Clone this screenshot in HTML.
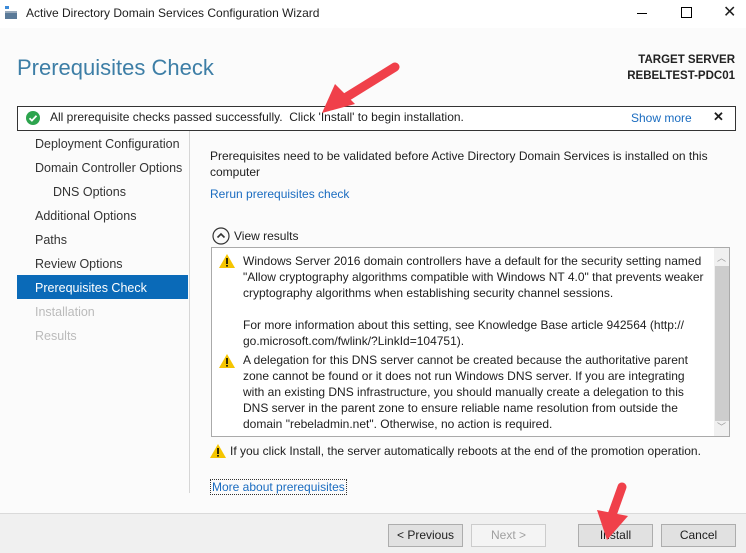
<!DOCTYPE html>
<html><head><meta charset="utf-8"><style>
*{margin:0;padding:0;box-sizing:border-box}
body{width:746px;height:553px;overflow:hidden;background:#fbfbfb;font-family:"Liberation Sans",sans-serif;font-size:12px;color:#1e1e1e;position:relative}
.a{position:absolute;white-space:nowrap}
.nav{position:absolute;left:35px;font-size:12.5px;color:#333}
.btn{position:absolute;top:524px;height:23px;border:1px solid #adadad;background:#e1e1e1;text-align:center;line-height:21px;font-size:12px}
.rt{position:absolute;left:243px;font-size:12px;line-height:16px;white-space:nowrap}
</style></head><body>
<div class="a" style="left:0;top:0;width:746px;height:28px;background:#fff"></div>
<svg class="a" style="left:4px;top:6px" width="14" height="14"><rect x="1" y="0" width="4" height="3" fill="#3c8ad8"/><rect x="1" y="5" width="12" height="8" fill="#5a7a98"/><rect x="1" y="5" width="12" height="2" fill="#9ab"/></svg>
<div class="a" style="left:26px;top:6px;font-size:12px">Active Directory Domain Services Configuration Wizard</div>
<div class="a" style="left:637px;top:13px;width:10px;height:1px;background:#000"></div>
<div class="a" style="left:681px;top:7px;width:11px;height:11px;border:1px solid #000"></div>
<div class="a" style="left:723px;top:2px;font-size:16px;font-weight:300">✕</div>
<div class="a" style="left:17px;top:55px;font-size:22px;color:#3d7ea6">Prerequisites Check</div>
<div class="a" style="right:11px;top:52px;font-size:11.5px;font-weight:bold;text-align:right;line-height:16px;color:#222">TARGET SERVER<br>REBELTEST-PDC01</div>
<div class="a" style="left:17px;top:106px;width:719px;height:25px;border:1px solid #333;background:#fff"></div>
<svg class="a" style="left:26px;top:111px" width="14" height="14"><circle cx="7" cy="7" r="7" fill="#2da44e"/><path d="M3.5 7.2l2.4 2.4 4.6-4.8" stroke="#fff" stroke-width="1.8" fill="none"/></svg>
<div class="a" style="left:50px;top:110px;font-size:12px">All prerequisite checks passed successfully.&nbsp; Click 'Install' to begin installation.</div>
<div class="a" style="left:631px;top:111px;color:#1a6cc0">Show more</div>
<div class="a" style="left:713px;top:109px;font-size:13px;font-weight:bold">✕</div>
<div class="a" style="left:189px;top:131px;width:1px;height:362px;background:#d6d6d6"></div>
<div class="nav" style="top:137px">Deployment Configuration</div>
<div class="nav" style="top:161px">Domain Controller Options</div>
<div class="nav" style="top:185px;left:53px">DNS Options</div>
<div class="nav" style="top:209px">Additional Options</div>
<div class="nav" style="top:233px">Paths</div>
<div class="nav" style="top:257px">Review Options</div>
<div class="a" style="left:17px;top:275px;width:171px;height:24px;background:#0a6ab8"></div>
<div class="nav" style="top:281px;color:#fff">Prerequisites Check</div>
<div class="nav" style="top:305px;color:#bbb">Installation</div>
<div class="nav" style="top:329px;color:#bbb">Results</div>
<div class="a" style="left:210px;top:148px;line-height:16px">Prerequisites need to be validated before Active Directory Domain Services is installed on this<br>computer</div>
<div class="a" style="left:210px;top:187px;color:#1a6cc0">Rerun prerequisites check</div>
<svg class="a" style="left:212px;top:227px" width="18" height="18"><circle cx="9" cy="9" r="8" fill="none" stroke="#333" stroke-width="1.2"/><path d="M5.5 10.5l3.5-3.5 3.5 3.5" fill="none" stroke="#333" stroke-width="1.6"/></svg>
<div class="a" style="left:234px;top:229px">View results</div>
<div class="a" style="left:211px;top:247px;width:519px;height:190px;border:1px solid #aaa;background:#fff;overflow:hidden">
<div class="a" style="left:502px;top:0;width:16px;height:188px;background:#f0f0f0"></div>
<div class="a" style="left:503px;top:18px;width:14px;height:155px;background:#cdcdcd"></div>
<div class="a" style="left:505px;top:3px;font-size:9px;color:#999">︿</div>
<div class="a" style="left:505px;top:172px;font-size:9px;color:#999">﹀</div>
</div>
<svg class="a" style="left:219px;top:254px" width="16" height="14"><path d="M8 0L16 14H0Z" fill="#f5c500"/><rect x="7.2" y="4" width="1.6" height="6" fill="#000"/><rect x="7.2" y="11" width="1.6" height="1.6" fill="#000"/></svg>
<div class="rt" style="top:253px">Windows Server 2016 domain controllers have a default for the security setting named<br>"Allow cryptography algorithms compatible with Windows NT 4.0" that prevents weaker<br>cryptography algorithms when establishing security channel sessions.<br><br>For more information about this setting, see Knowledge Base article 942564 (http://<br>go.microsoft.com/fwlink/?LinkId=104751).</div>
<svg class="a" style="left:219px;top:354px" width="16" height="14"><path d="M8 0L16 14H0Z" fill="#f5c500"/><rect x="7.2" y="4" width="1.6" height="6" fill="#000"/><rect x="7.2" y="11" width="1.6" height="1.6" fill="#000"/></svg>
<div class="rt" style="top:352px">A delegation for this DNS server cannot be created because the authoritative parent<br>zone cannot be found or it does not run Windows DNS server. If you are integrating<br>with an existing DNS infrastructure, you should manually create a delegation to this<br>DNS server in the parent zone to ensure reliable name resolution from outside the<br>domain "rebeladmin.net". Otherwise, no action is required.</div>
<svg class="a" style="left:210px;top:444px" width="16" height="14"><path d="M8 0L16 14H0Z" fill="#f5c500"/><rect x="7.2" y="4" width="1.6" height="6" fill="#000"/><rect x="7.2" y="11" width="1.6" height="1.6" fill="#000"/></svg>
<div class="a" style="left:230px;top:444px">If you click Install, the server automatically reboots at the end of the promotion operation.</div>
<div class="a" style="left:210px;top:479px;color:#1a6cc0;border:1px dotted #333;padding:0 1px">More about prerequisites</div>
<div class="a" style="left:0;top:513px;width:746px;height:40px;background:#f0f0f0;border-top:1px solid #dadada"></div>
<div class="btn" style="left:388px;width:75px">&lt; Previous</div>
<div class="btn" style="left:471px;width:75px;color:#a0a0a0;border-color:#ccc;background:#f4f4f4">Next &gt;</div>
<div class="btn" style="left:578px;width:75px">Install</div>
<div class="btn" style="left:661px;width:75px">Cancel</div>
<svg class="a" style="left:0;top:0" width="746" height="553"><g stroke="#f0404a" stroke-width="9" stroke-linecap="round" fill="#f0404a"><line x1="395" y1="67" x2="345" y2="98"/><line x1="622" y1="487" x2="612" y2="515"/></g><path d="M322 113L335 84L355 104Z" fill="#f0404a"/><path d="M607 540L597 510L628 516Z" fill="#f0404a"/></svg>
</body></html>
